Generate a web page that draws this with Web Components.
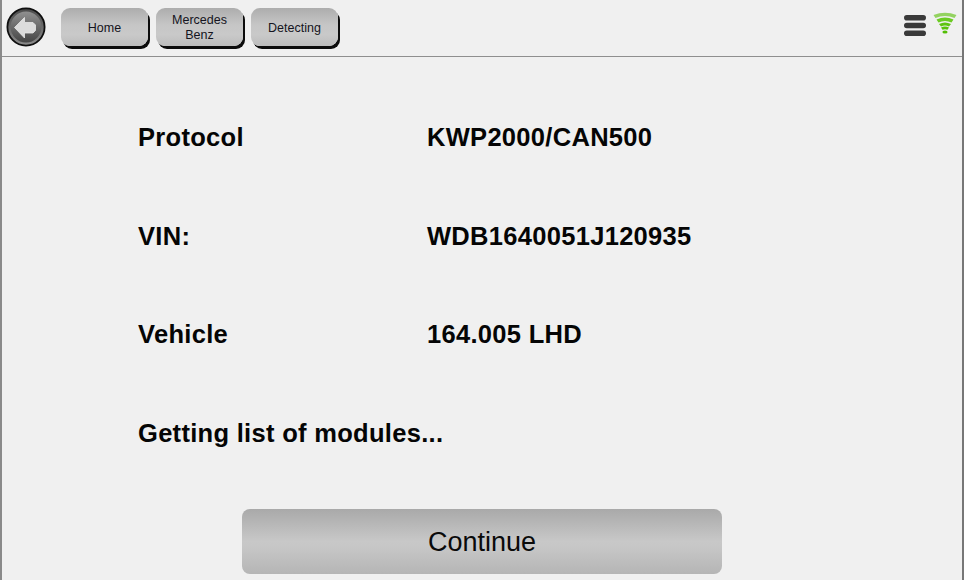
<!DOCTYPE html>
<html><head><meta charset="utf-8"><style>
html,body{margin:0;padding:0;width:964px;height:580px;overflow:hidden;background:#f0f0f0}
</style></head><body>
<app-screen>
  <tool-bar slot="bar">
    <back-button></back-button>
    <crumb-button style="margin-left:15px;--w:87px">Home</crumb-button>
    <crumb-button style="margin-left:8px;--w:87px">Mercedes<br>Benz</crumb-button>
    <crumb-button style="margin-left:8px;--w:87px">Detecting</crumb-button>
    <status-icons slot="end"></status-icons>
  </tool-bar>
  <info-row label="Protocol" value="KWP2000/CAN500"></info-row>
  <info-row label="VIN:" value="WDB1640051J120935"></info-row>
  <info-row label="Vehicle" value="164.005 LHD"></info-row>
  <info-row label="Getting list of modules..."></info-row>
  <big-button slot="foot">Continue</big-button>
</app-screen>
<script>
function def(name,html){customElements.define(name,class extends HTMLElement{
  constructor(){super();this.attachShadow({mode:'open'}).innerHTML=html;}
});}
def('app-screen',`<style>
:host{display:flex;flex-direction:column;width:964px;height:580px;box-sizing:border-box;border-left:2px solid #8a8a8a;border-right:2px solid #777;background:#f0f0f0}
.main{flex:1;min-height:0;display:flex;flex-direction:column;padding:62px 0 0 136px}
.foot{display:flex;justify-content:center;padding:0 0 6px 0}
</style><slot name="bar"></slot><div class="main"><slot></slot></div><div class="foot"><slot name="foot"></slot></div>`);
def('tool-bar',`<style>
:host{display:flex;align-items:flex-start;height:56px;border-bottom:1px solid #8f8f8f;padding-left:4px;flex:none}
.end{margin-left:auto}
</style><slot></slot><div class="end"><slot name="end"></slot></div>`);
def('back-button',`<style>:host{display:block;width:40px;height:40px;margin-top:7px}svg{display:block}</style>
<svg width="40" height="40" viewBox="0 0 40 40">
<defs><linearGradient id="g" x1="0" y1="0" x2="0" y2="1"><stop offset="0" stop-color="#909090"/><stop offset="1" stop-color="#454545"/></linearGradient>
<linearGradient id="r" x1="0" y1="0" x2="0" y2="1"><stop offset="0" stop-color="#4a4a4a"/><stop offset="1" stop-color="#8c8c8c"/></linearGradient></defs>
<circle cx="20" cy="20" r="18.6" fill="url(#r)" stroke="#0f0f0f" stroke-width="1.8"/>
<circle cx="20" cy="20" r="15.4" fill="url(#g)"/>
<path d="M8.5 20.5 L18.5 10.5 V15.5 H27 L29.5 18 V23.5 L27 26 H18.5 V31 Z" fill="#dcdcdc" stroke="#e8e8e8" stroke-width=".8" stroke-linejoin="round"/>
</svg>`);
def('crumb-button',`<style>
:host{display:flex;align-items:center;justify-content:center;text-align:center;width:var(--w);height:38px;margin-top:8px;padding-top:2px;box-sizing:border-box;border-radius:9px;
background:linear-gradient(#adadad,#c6c6c6 45%,#c9c9c9 70%,#bcbcbc);box-shadow:2px 3px 0 #0c0c0c;font:12.5px/15px "Liberation Sans",Arial,sans-serif;color:#141420}
</style><div><slot></slot></div>`);
def('status-icons',`<style>:host{display:flex;gap:7px;margin:12px 5px 0 0}svg{display:block}</style>
<svg width="22" height="22" viewBox="0 0 22 22" style="margin-top:3px"><g fill="#3a3a3a"><rect y="0" width="22" height="5.6" rx="2.8"/><rect y="7.7" width="22" height="5.6" rx="2.8"/><rect y="15.4" width="22" height="5.6" rx="2.8"/></g></svg>
<svg width="24" height="22" viewBox="0 0 24 22">
<path d="M0.5 3 Q12 -1.5 23.5 3 L21.5 6 Q12 2 2.5 6 Z" fill="#93d260"/>
<path d="M3.5 7.5 Q12 3.5 20.5 7.5 L18.5 10.5 Q12 7.5 5.5 10.5 Z" fill="#6ccb22"/>
<path d="M6 12 Q12 9 18 12 L16 14.5 Q12 12.5 8 14.5 Z" fill="#5ec40f"/>
<path d="M8 15.5 Q12 13.6 16 15.5 L14.5 17.7 Q12 16.6 9.5 17.7 Z" fill="#58c208"/>
<ellipse cx="12" cy="20" rx="2.6" ry="1.6" fill="#52be04"/></svg>`);
customElements.define('info-row',class extends HTMLElement{
  constructor(){super();this.attachShadow({mode:'open'});}
  connectedCallback(){
    const l=this.getAttribute('label'),v=this.getAttribute('value');
    this.shadowRoot.innerHTML=`<style>:host{display:flex;flex:none;height:98.5px;font:bold 25.5px/36px "Liberation Sans",Arial,sans-serif;letter-spacing:.3px;color:#050505;align-items:flex-start}
    .l{width:289px;flex:none;white-space:nowrap;${v?'':'width:auto'}}.v{white-space:nowrap}</style><div class="l">${l}</div>${v?`<div class="v">${v}</div>`:''}`;
  }
});
def('big-button',`<style>
:host{display:flex;align-items:center;justify-content:center;width:480px;height:65px;box-sizing:border-box;padding-top:2px;border-radius:8px;background:linear-gradient(#a9a9a9,#c8c8c8 50%,#c6c6c6 60%,#b5b5b5);font:27px "Liberation Sans",Arial,sans-serif;color:#0a0a0a}
</style><slot></slot>`);
</script>
</body></html>
